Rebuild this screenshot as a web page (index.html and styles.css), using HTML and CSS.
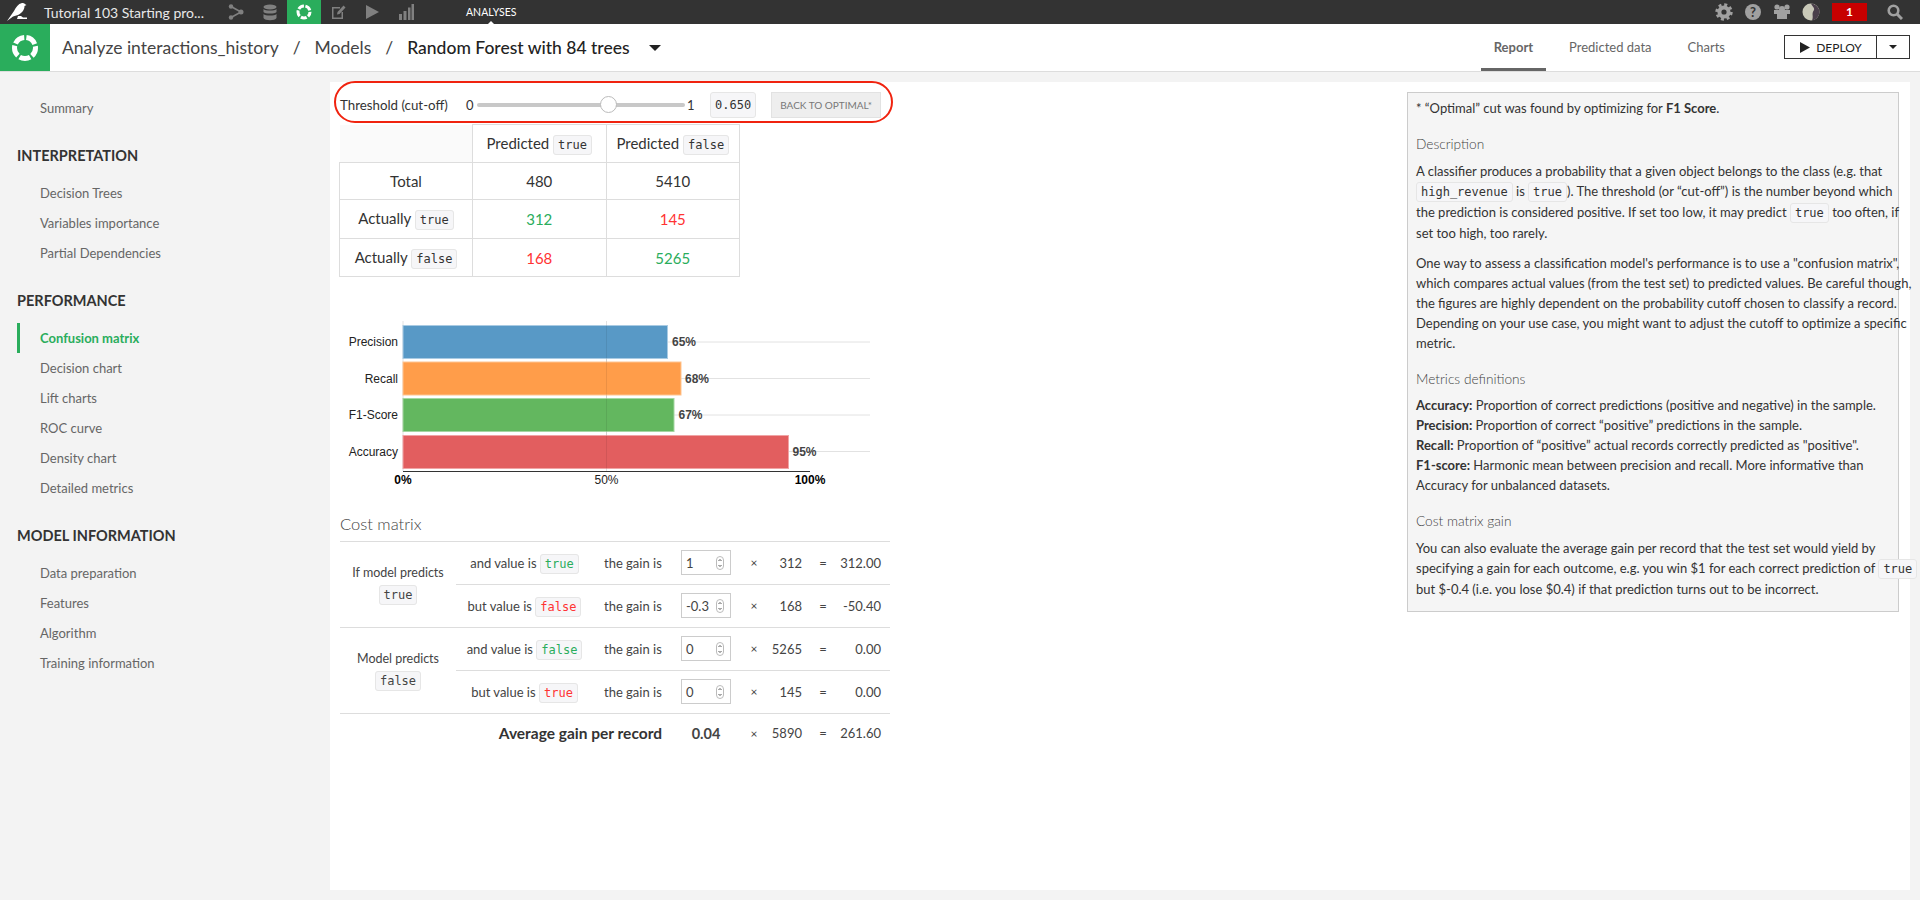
FILE: index.html
```html
<!DOCTYPE html>
<html lang="en">
<head>
    <meta charset="UTF-8">
    <title>Random Forest with 84 trees</title>
    <link rel="stylesheet" href="styles.css">
</head>
<body>

<div class="topbar">
    <svg class="bird" width="22" height="22" viewBox="0 0 22 22"><path d="M1 20 L8 10 C10 6 12 3 16 2 C18 1.5 19 3 20.5 4 L18.5 5 C18.5 9 16 12 12 14 L7 15.5 Z" fill="#fff"/><path d="M12 15 L15 15 L17 16.5 L21 16.5 L21 18 L11 18 Z" fill="#fff"/></svg>
    <span class="project">Tutorial 103 Starting pro...</span>
    <div class="nav-icons">
        <span class="nav-icon"><svg width="16" height="16" viewBox="0 0 16 16"><circle cx="3" cy="2.5" r="2.2" fill="#808080"/><circle cx="3" cy="13.5" r="2.2" fill="#808080"/><circle cx="13" cy="8" r="2.5" fill="#808080"/><path d="M3 2.5 L13 8 L3 13.5" fill="none" stroke="#808080" stroke-width="1.6"/></svg></span>
        <span class="nav-icon"><svg width="14" height="17" viewBox="0 0 14 17"><g fill="#808080"><ellipse cx="7" cy="3" rx="6.5" ry="2.6"/><path d="M.5 5 C2 7 12 7 13.5 5 V8 C12 10 2 10 .5 8 Z"/><path d="M.5 10 C2 12 12 12 13.5 10 V14 C12 17 2 17 .5 14 Z"/></g></svg></span>
        <span class="nav-icon active"><svg width="18" height="18" viewBox="0 0 18 18"><circle cx="9" cy="9" r="6" fill="none" stroke="#fff" stroke-width="3" stroke-dasharray="6 1.54" stroke-dashoffset="-6.4"/></svg></span>
        <span class="nav-icon"><svg width="15" height="16" viewBox="0 0 15 16"><path d="M1 3 H9 V4.5 H2.5 V13.5 H10.5 V8 H12 V15 H1 Z" fill="#808080"/><path d="M6 10.5 L6.5 8 L12.5 1.5 L14.5 3.5 L8.5 10 Z" fill="#808080"/></svg></span>
        <span class="nav-icon"><svg width="15" height="16" viewBox="0 0 15 16"><path d="M1 1 L14 8 L1 15 Z" fill="#808080"/></svg></span>
        <span class="nav-icon"><svg width="15" height="16" viewBox="0 0 15 16"><g fill="#808080"><rect x="0" y="10" width="3" height="6"/><rect x="4.5" y="7" width="3" height="9"/><rect x="9" y="3.5" width="2.5" height="12.5"/><rect x="12.5" y="0" width="2.5" height="16"/></g></svg></span>
    </div>
    <span class="section-name">ANALYSES</span>
    <div class="top-right">
        <svg width="18" height="18" viewBox="0 0 18 18"><circle cx="9" cy="9" r="4.6" fill="none" stroke="#a0a0a0" stroke-width="4"/><circle cx="9" cy="9" r="7.4" fill="none" stroke="#a0a0a0" stroke-width="2.6" stroke-dasharray="3 2.81"/></svg>
        <svg width="18" height="18" viewBox="0 0 18 18"><circle cx="9" cy="9" r="8" fill="#a0a0a0"/><text x="9" y="13.5" class="help-mark">?</text></svg>
        <svg width="18" height="16" viewBox="0 0 18 16"><g fill="#a0a0a0"><circle cx="4" cy="3" r="2.6"/><circle cx="14" cy="3" r="2.6"/><circle cx="9" cy="5" r="3"/><path d="M1 6 H17 V10 H14 V15 H4 V10 H1 Z"/></g></svg>
        <svg width="18" height="18" viewBox="0 0 18 18"><circle cx="9" cy="9" r="8.5" fill="#c9c9b8"/><path d="M9 .5 C14 1 17.5 5 17.5 9 C17.5 13 14 17 10 17.5 C12 13 9 11 12 7 C13 5 10 3 9 .5 Z" fill="#4a3f4a"/></svg>
        <span class="notif">1</span>
        <svg class="search" width="16" height="16" viewBox="0 0 16 16"><circle cx="6.5" cy="6.5" r="4.8" fill="none" stroke="#a0a0a0" stroke-width="2.6"/><path d="M10 10 L15 15" stroke="#a0a0a0" stroke-width="3"/></svg>
    </div>
</div>

<div class="subbar">
    <div class="logo-box"><svg width="30" height="30" viewBox="0 0 30 30"><circle cx="15" cy="15" r="10.5" fill="none" stroke="#fff" stroke-width="5" stroke-dasharray="11 2.19" stroke-dashoffset="-11" /></svg></div>
    <div class="crumbs">
        <span>Analyze interactions_history</span>
        <span class="sep">/</span>
        <span>Models</span>
        <span class="sep">/</span>
        <span class="crumb-current">Random Forest with 84 trees</span>
        <span class="caret"></span>
    </div>
    <div class="tabs">
        <span class="tab tab-active">Report</span>
        <span class="tab">Predicted data</span>
        <span class="tab">Charts</span>
    </div>
    <div class="deploy">
        <span class="deploy-main"><svg width="11" height="11" viewBox="0 0 11 11"><path d="M1 0 L11 5.5 L1 11 Z" fill="#222"/></svg>DEPLOY</span>
        <span class="deploy-more"><span class="caret-small"></span></span>
    </div>
</div>

<div class="layout">
    <div class="sidebar">
        <a class="side-link side-first">Summary</a>
        <h4>INTERPRETATION</h4>
        <a class="side-link">Decision Trees</a>
        <a class="side-link">Variables importance</a>
        <a class="side-link">Partial Dependencies</a>
        <h4>PERFORMANCE</h4>
        <a class="side-link side-active">Confusion matrix</a>
        <a class="side-link">Decision chart</a>
        <a class="side-link">Lift charts</a>
        <a class="side-link">ROC curve</a>
        <a class="side-link">Density chart</a>
        <a class="side-link">Detailed metrics</a>
        <h4>MODEL INFORMATION</h4>
        <a class="side-link">Data preparation</a>
        <a class="side-link">Features</a>
        <a class="side-link">Algorithm</a>
        <a class="side-link">Training information</a>
    </div>

    <div class="panel">
        <div class="report">
            <div class="threshold">
                <span class="th-label">Threshold (cut-off)</span>
                <span class="th-end">0</span>
                <div class="slider"><span class="knob"></span></div>
                <span class="th-end">1</span>
                <span class="th-value">0.650</span>
                <span class="th-btn">BACK TO OPTIMAL*</span>
            </div>

            <table class="confusion">
                <tr class="conf-head">
                    <th class="blank"></th>
                    <th>Predicted <code>true</code></th>
                    <th>Predicted <code>false</code></th>
                </tr>
                <tr class="conf-total">
                    <td>Total</td><td>480</td><td>5410</td>
                </tr>
                <tr class="conf-true">
                    <td>Actually <code>true</code></td><td class="good">312</td><td class="bad">145</td>
                </tr>
                <tr>
                    <td>Actually <code>false</code></td><td class="bad">168</td><td class="good">5265</td>
                </tr>
            </table>

            <svg class="chart" width="560" height="180" viewBox="0 0 560 180">
                <g stroke="#e2e2e2" stroke-width="1">
                    <line x1="69" y1="11" x2="69" y2="161"/>
                    <line x1="69" y1="32" x2="536" y2="32"/>
                    <line x1="69" y1="68.5" x2="536" y2="68.5"/>
                    <line x1="69" y1="105" x2="536" y2="105"/>
                    <line x1="69" y1="141.5" x2="536" y2="141.5"/>
                    <line x1="272.5" y1="11" x2="272.5" y2="161"/>
                </g>
                <rect x="69" y="15.5" width="264.5" height="33" fill="#5899c6" stroke="#a9cbe3"/>
                <rect x="69" y="52" width="278" height="33" fill="#ff9d4a" stroke="#ffc48f"/>
                <rect x="69" y="88.5" width="271" height="33" fill="#63b75f" stroke="#a5d6a2"/>
                <rect x="69" y="125.5" width="385.5" height="33" fill="#e25e5f" stroke="#f0a4a5"/>
                <line x1="272.5" y1="15" x2="272.5" y2="159" stroke="#000" stroke-opacity=".08"/>
                <g class="bar-name">
                    <text x="64" y="36">Precision</text>
                    <text x="64" y="72.5">Recall</text>
                    <text x="64" y="109">F1-Score</text>
                    <text x="64" y="145.5">Accuracy</text>
                </g>
                <g class="bar-val">
                    <text x="338" y="36">65%</text>
                    <text x="351" y="72.5">68%</text>
                    <text x="344.5" y="109">67%</text>
                    <text x="458.5" y="145.5">95%</text>
                </g>
                <line x1="69" y1="161.5" x2="476" y2="161.5" stroke="#333" stroke-width="1"/>
                <g class="axis-lab">
                    <text x="69" y="173.5" class="axis-bold">0%</text>
                    <text x="272.5" y="173.5">50%</text>
                    <text x="476" y="173.5" class="axis-bold">100%</text>
                </g>
            </svg>

            <h3 class="cost-title">Cost matrix</h3>
            <table class="cost">
                <tr>
                    <td rowspan="2" class="cost-pred">If model predicts<br><code>true</code></td>
                    <td class="cost-val">and value is <code class="c-good">true</code></td>
                    <td class="cost-gain">the gain is</td>
                    <td class="cost-in"><span class="num-input">1<svg class="spin" width="8" height="14" viewBox="0 0 8 14"><rect x=".5" y=".5" width="7" height="13" rx="3.5" fill="#fff" stroke="#bbb"/><path d="M2.5 5 L4 3.5 L5.5 5 M2.5 9 L4 10.5 L5.5 9" fill="none" stroke="#555"/></svg></span></td>
                    <td class="cost-x">×</td>
                    <td class="cost-n">312</td>
                    <td class="cost-eq">=</td>
                    <td class="cost-r">312.00</td>
                </tr>
                <tr>
                    <td class="cost-val">but value is <code class="c-bad">false</code></td>
                    <td class="cost-gain">the gain is</td>
                    <td class="cost-in"><span class="num-input">-0.3<svg class="spin" width="8" height="14" viewBox="0 0 8 14"><rect x=".5" y=".5" width="7" height="13" rx="3.5" fill="#fff" stroke="#bbb"/><path d="M2.5 5 L4 3.5 L5.5 5 M2.5 9 L4 10.5 L5.5 9" fill="none" stroke="#555"/></svg></span></td>
                    <td class="cost-x">×</td>
                    <td class="cost-n">168</td>
                    <td class="cost-eq">=</td>
                    <td class="cost-r">-50.40</td>
                </tr>
                <tr>
                    <td rowspan="2" class="cost-pred">Model predicts<br><code>false</code></td>
                    <td class="cost-val">and value is <code class="c-good">false</code></td>
                    <td class="cost-gain">the gain is</td>
                    <td class="cost-in"><span class="num-input">0<svg class="spin" width="8" height="14" viewBox="0 0 8 14"><rect x=".5" y=".5" width="7" height="13" rx="3.5" fill="#fff" stroke="#bbb"/><path d="M2.5 5 L4 3.5 L5.5 5 M2.5 9 L4 10.5 L5.5 9" fill="none" stroke="#555"/></svg></span></td>
                    <td class="cost-x">×</td>
                    <td class="cost-n">5265</td>
                    <td class="cost-eq">=</td>
                    <td class="cost-r">0.00</td>
                </tr>
                <tr>
                    <td class="cost-val">but value is <code class="c-bad">true</code></td>
                    <td class="cost-gain">the gain is</td>
                    <td class="cost-in"><span class="num-input">0<svg class="spin" width="8" height="14" viewBox="0 0 8 14"><rect x=".5" y=".5" width="7" height="13" rx="3.5" fill="#fff" stroke="#bbb"/><path d="M2.5 5 L4 3.5 L5.5 5 M2.5 9 L4 10.5 L5.5 9" fill="none" stroke="#555"/></svg></span></td>
                    <td class="cost-x">×</td>
                    <td class="cost-n">145</td>
                    <td class="cost-eq">=</td>
                    <td class="cost-r">0.00</td>
                </tr>
                <tr class="cost-avg">
                    <td colspan="3" class="avg-label">Average gain per record</td>
                    <td class="avg-val">0.04</td>
                    <td class="cost-x">×</td>
                    <td class="cost-n">5890</td>
                    <td class="cost-eq">=</td>
                    <td class="cost-r">261.60</td>
                </tr>
            </table>
        </div>

        <div class="help">
            <p>* “Optimal” cut was found by optimizing for <strong>F1 Score</strong>.</p>
            <h5>Description</h5>
            <p>A classifier produces a probability that a given object belongs to the class (e.g. that<br>
            <code>high_revenue</code> is <code>true</code>). The threshold (or “cut-off”) is the number beyond which<br>
            the prediction is considered positive. If set too low, it may predict <code>true</code> too often, if<br>
            set too high, too rarely.</p>
            <p>One way to assess a classification model's performance is to use a "confusion matrix",<br>
            which compares actual values (from the test set) to predicted values. Be careful though,<br>
            the figures are highly dependent on the probability cutoff chosen to classify a record.<br>
            Depending on your use case, you might want to adjust the cutoff to optimize a specific<br>
            metric.</p>
            <h5>Metrics definitions</h5>
            <p><strong>Accuracy:</strong> Proportion of correct predictions (positive and negative) in the sample.<br>
            <strong>Precision:</strong> Proportion of correct “positive” predictions in the sample.<br>
            <strong>Recall:</strong> Proportion of “positive” actual records correctly predicted as "positive".<br>
            <strong>F1-score:</strong> Harmonic mean between precision and recall. More informative than<br>
            Accuracy for unbalanced datasets.</p>
            <h5>Cost matrix gain</h5>
            <p>You can also evaluate the average gain per record that the test set would yield by<br>
            specifying a gain for each outcome, e.g. you win $1 for each correct prediction of <code>true</code><br>
            but $-0.4 (i.e. you lose $0.4) if that prediction turns out to be incorrect.</p>
        </div>
    </div>
</div>

</body>
</html>
```

FILE: styles.css
```css
* {
    box-sizing: border-box;
}

html, body {
    height: 100%;
}

body {
    margin: 0;
    background-color: #f3f3f3;
    font-family: Lato, "Noto Sans", sans-serif;
    font-size: 13px;
    color: #333;
    overflow: hidden;
}

code {
    font-family: "DejaVu Sans Mono", monospace;
    font-size: 12px;
    background-color: #f6f6f8;
    border: 1px solid #e6e6e6;
    border-radius: 3px;
    padding: 2px 4px;
}

/* top bar */
.topbar {
    height: 24px;
    background-color: #333;
    display: flex;
    align-items: center;
}

.bird {
    margin-left: 6px;
    flex-shrink: 0;
}

.project {
    color: #e8e8e8;
    font-size: 14px;
    margin-left: 16px;
    width: 175px;
    white-space: nowrap;
}

.nav-icons {
    display: flex;
    align-items: center;
    height: 24px;
}

.nav-icon {
    width: 34px;
    height: 24px;
    display: flex;
    align-items: center;
    justify-content: center;
}

.nav-icon.active {
    background-color: #2aad5c;
}

.section-name {
    color: #fff;
    font-size: 10.5px;
    margin-left: 43px;
    position: relative;
    line-height: 24px;
}

.section-name::after {
    content: "";
    position: absolute;
    left: 50%;
    bottom: 0;
    margin-left: -3px;
    border-left: 3px solid transparent;
    border-right: 3px solid transparent;
    border-bottom: 3px solid #fff;
}

.top-right {
    margin-left: auto;
    display: flex;
    align-items: center;
    gap: 11px;
    padding-right: 17px;
}

.help-mark {
    font-size: 13px;
    font-weight: bold;
    fill: #333;
    text-anchor: middle;
}

.notif {
    width: 35px;
    height: 18px;
    background-color: #c70000;
    color: #fff;
    font-weight: bold;
    font-size: 12px;
    text-align: center;
    line-height: 18px;
    margin-left: 1px;
}

.search {
    margin-left: 9px;
}

/* second bar */
.subbar {
    height: 48px;
    background-color: #fff;
    border-bottom: 1px solid #ddd;
    display: flex;
    align-items: center;
}

.logo-box {
    width: 50px;
    height: 47px;
    background-color: #2aad5c;
    display: flex;
    align-items: center;
    justify-content: center;
    flex-shrink: 0;
}

.crumbs {
    margin-left: 12px;
    font-size: 17.5px;
    color: #444;
    display: flex;
    align-items: center;
    white-space: nowrap;
}

.sep {
    margin: 0 14px;
}

.crumb-current {
    color: #222;
    font-weight: 500;
}

.caret {
    margin-left: 19px;
    border-left: 6px solid transparent;
    border-right: 6px solid transparent;
    border-top: 6px solid #222;
}

.tabs {
    margin-left: auto;
    display: flex;
    height: 47px;
    margin-right: 36px;
}

.tab {
    padding: 0 13px;
    margin-right: 10px;
    font-size: 13px;
    color: #666;
    line-height: 47px;
}

.tab-active {
    font-weight: bold;
    border-bottom: 3px solid #666;
}

.deploy {
    display: flex;
    height: 24px;
    margin-right: 10px;
    border: 1px solid #333;
    margin-top: -1px;
}

.deploy-main {
    width: 92px;
    border-right: 1px solid #333;
    display: flex;
    align-items: center;
    justify-content: center;
    gap: 6px;
    font-size: 12px;
    color: #222;
}

.deploy-more {
    width: 32px;
    display: flex;
    align-items: center;
    justify-content: center;
}

.caret-small {
    border-left: 4px solid transparent;
    border-right: 4px solid transparent;
    border-top: 4px solid #222;
}

/* page layout */
.layout {
    display: flex;
    height: 828px;
}

.sidebar {
    width: 330px;
    flex-shrink: 0;
    padding: 21px 0 0 17px;
}

.sidebar h4 {
    margin: 17.5px 0 7.5px;
    font-size: 14.5px;
    line-height: 30px;
    color: #333;
    font-weight: bold;
}

.side-link {
    display: block;
    height: 30px;
    line-height: 30px;
    padding-left: 23px;
    font-size: 13px;
    color: #666;
}

.side-active {
    color: #2aad5c;
    font-weight: bold;
    border-left: 3px solid #2aad5c;
    padding-left: 20px;
}

.panel {
    width: 1580px;
    height: 808px;
    margin-top: 10px;
    background-color: #fff;
    display: flex;
    justify-content: space-between;
    padding: 0 11px 0 4px;
}

.report {
    width: 560px;
}

/* threshold row */
.threshold {
    width: 559px;
    height: 42px;
    margin-top: -1px;
    border: 2px solid #f0230f;
    border-radius: 21px;
    display: flex;
    align-items: center;
    padding: 6px 0 0 4px;
}

.th-label {
    width: 126px;
    font-size: 13.3px;
    white-space: nowrap;
}

.slider {
    width: 208px;
    height: 4px;
    margin-left: 3.5px;
    background-color: #c8c8c8;
    border-radius: 2px;
    position: relative;
}

.slider + .th-end {
    margin-left: 2px;
}

.knob {
    position: absolute;
    left: 123px;
    top: -7px;
    width: 17px;
    height: 17px;
    border-radius: 50%;
    background-color: #fff;
    border: 1px solid #bbb;
}

.th-value {
    margin-left: 15.5px;
    width: 46px;
    height: 26px;
    line-height: 24px;
    text-align: center;
    font-family: "DejaVu Sans Mono", monospace;
    font-size: 12px;
    background-color: #f6f6f8;
    border: 1px solid #e6e6e6;
    border-radius: 3px;
}

.th-btn {
    margin-left: 15px;
    width: 110px;
    height: 26px;
    line-height: 24px;
    text-align: center;
    white-space: nowrap;
    font-size: 10px;
    color: #777;
    background-color: #eee;
    border: 1px solid #e2e2e2;
}

/* confusion matrix */
.confusion {
    margin: 1px 0 0 5px;
    width: 401px;
    border-collapse: collapse;
    table-layout: fixed;
    font-size: 15px;
    color: #333;
}

.confusion th,
.confusion td {
    border: 1px solid #ddd;
    text-align: center;
    font-weight: normal;
    height: 38px;
    padding: 0;
    line-height: 20px;
}

.confusion tr > :first-child {
    width: 133px;
}

.confusion .blank {
    background-color: #fafafa;
    border-top-color: transparent;
    border-left-color: transparent;
}

.confusion .conf-total td {
    height: 37px;
}

.confusion .conf-true td {
    height: 39px;
}

.good {
    color: #2aad5c;
}

.bad {
    color: #f33;
}

/* bar chart */
.chart {
    display: block;
    margin-top: 33px;
    overflow: visible;
}

.bar-name text {
    font-family: "Liberation Sans", sans-serif;
    font-size: 12px;
    text-anchor: end;
    fill: #222;
}

.bar-val text {
    font-family: "Liberation Sans", sans-serif;
    font-size: 12px;
    font-weight: bold;
    fill: #444;
}

.axis-lab text {
    font-family: "Liberation Sans", sans-serif;
    font-size: 12px;
    text-anchor: middle;
    fill: #222;
}

.axis-lab .axis-bold {
    font-weight: bold;
    fill: #000;
}

/* cost matrix */
.cost-title {
    margin: 20.5px 0 3px 6px;
    height: 27px;
    line-height: 27px;
    font-size: 16.5px;
    font-weight: 300;
    color: #444;
}

.cost {
    margin-left: 6px;
    width: 550px;
    border-collapse: collapse;
    table-layout: fixed;
    border-top: 1px solid #ddd;
    font-size: 13px;
    color: #444;
}

.cost td {
    height: 43px;
    padding: 0;
    border-bottom: 1px solid #ddd;
    white-space: nowrap;
}

.cost .cost-pred {
    width: 116px;
    text-align: center;
    font-size: 12.5px;
    line-height: 22px;
}

.cost .cost-val {
    width: 137px;
    text-align: center;
}

.cost .cost-gain {
    width: 88px;
    padding-left: 11px;
}

.cost-in {
    width: 63px;
}

.cost-x {
    width: 20px;
    text-align: center;
    font-size: 12px;
}

.cost-n {
    width: 38px;
    text-align: right;
}

.cost .cost-eq {
    width: 34px;
    padding-left: 8px;
    text-align: center;
}

.cost .cost-r {
    text-align: right;
    padding-right: 9px;
}

.cost .cost-avg td {
    border-bottom: none;
    height: 40px;
}

.num-input {
    display: flex;
    align-items: center;
    justify-content: space-between;
    width: 50px;
    height: 25px;
    padding: 0 6px 0 4px;
    border: 1px solid #ccc;
    font-size: 13px;
}

.c-good {
    color: #2aad5c;
}

.c-bad {
    color: #f33;
}

.cost .avg-label {
    text-align: right;
    padding-right: 19px;
    font-size: 15.5px;
    font-weight: bold;
    color: #333;
}

.cost .avg-val {
    font-size: 14.5px;
    font-weight: bold;
    text-align: center;
    padding-right: 13px;
}

/* help box */
.help {
    width: 492px;
    height: 520px;
    margin-top: 10px;
    background-color: #f5f5f5;
    border: 1px solid #ccc;
    padding: 5px 8px;
    font-size: 13px;
    line-height: 20px;
    color: #333;
    white-space: nowrap;
}

.help p {
    margin: 0 0 10px;
}

.help h5 {
    margin: 16px 0 6.5px;
    font-size: 13.7px;
    font-weight: 300;
    color: #444;
    line-height: 20px;
}
```
